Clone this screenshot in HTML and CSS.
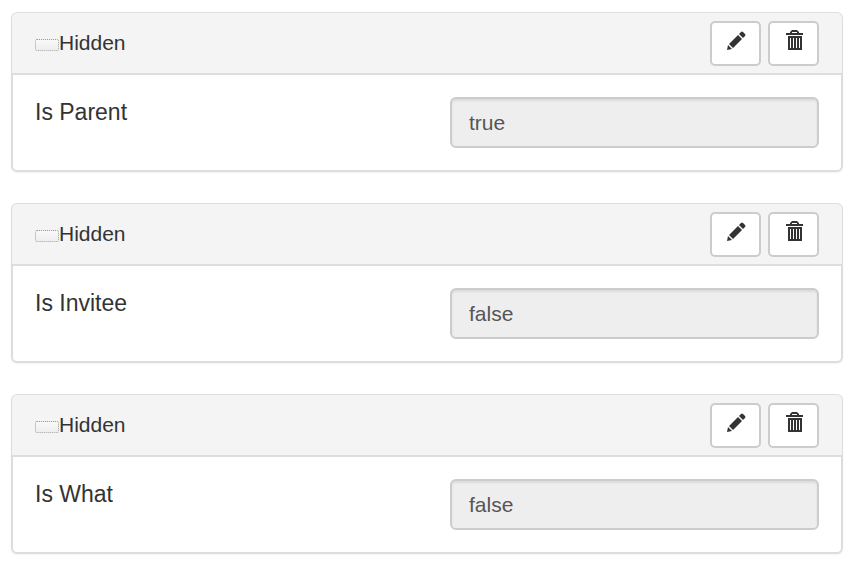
FILE: index.html
```html
<!DOCTYPE html>
<html lang="en">
<head>
    <meta charset="UTF-8">
    <meta name="viewport" content="width=device-width, initial-scale=1.0">
    <title>Hidden Fields</title>
    <link rel="stylesheet" href="styles.css">
</head>
<body>
    <svg class="sprite" aria-hidden="true">
        <symbol id="pencil" viewBox="0 0 20 20">
            <path d="M1 20l1-5 4 4zM3 14l9-9 4 4-9 9zM13 4l2-2q1-1 2 0l2 2q1 1 0 2l-2 2z"/>
        </symbol>
        <symbol id="trash" viewBox="0 0 20 20">
            <path fill-rule="evenodd" d="M6 3V2L8 0h5l2 2v1h4v2H2V3zM8 3h5V2H8zM4 6h14v14H4zM6 8v10h1V8zM9 8v10h1V8zM12 8v10h1V8zM15 8v10h1V8z"/>
        </symbol>
    </svg>

    <div class="container">
        <div class="panel">
            <div class="panel-heading">
                <span class="field-icon"></span>
                <span class="field-type">Hidden</span>
                <button type="button" class="btn" aria-label="Edit"><svg class="icon"><use href="#pencil"/></svg></button>
                <button type="button" class="btn" aria-label="Delete"><svg class="icon"><use href="#trash"/></svg></button>
            </div>
            <div class="panel-body">
                <label for="isParent">Is Parent</label>
                <input type="text" id="isParent" class="form-control" value="true" readonly>
            </div>
        </div>

        <div class="panel">
            <div class="panel-heading">
                <span class="field-icon"></span>
                <span class="field-type">Hidden</span>
                <button type="button" class="btn" aria-label="Edit"><svg class="icon"><use href="#pencil"/></svg></button>
                <button type="button" class="btn" aria-label="Delete"><svg class="icon"><use href="#trash"/></svg></button>
            </div>
            <div class="panel-body">
                <label for="isInvitee">Is Invitee</label>
                <input type="text" id="isInvitee" class="form-control" value="false" readonly>
            </div>
        </div>

        <div class="panel">
            <div class="panel-heading">
                <span class="field-icon"></span>
                <span class="field-type">Hidden</span>
                <button type="button" class="btn" aria-label="Edit"><svg class="icon"><use href="#pencil"/></svg></button>
                <button type="button" class="btn" aria-label="Delete"><svg class="icon"><use href="#trash"/></svg></button>
            </div>
            <div class="panel-body">
                <label for="isWhat">Is What</label>
                <input type="text" id="isWhat" class="form-control" value="false" readonly>
            </div>
        </div>
    </div>
</body>
</html>
```
FILE: styles.css
```css
* {
    box-sizing: border-box;
}

body {
    margin: 0;
    background: #fff;
    color: #333;
    font-family: "Liberation Sans", Arial, sans-serif;
    font-size: 21px;
    line-height: 30px;
}

.sprite {
    display: none;
}

.container {
    display: flex;
    flex-direction: column;
    gap: 31px;
    padding: 12px 8px 8px 11px;
}

.panel {
    border: 2px solid #ddd;
    border-radius: 6px;
    background: #fff;
    box-shadow: 0 1px 2px rgba(0, 0, 0, 0.05);
}

/* grey heading runs 1px over the panel border */
.panel-heading {
    display: flex;
    align-items: center;
    margin: -1px -1px 0;
    padding: 8px 23px 7px;
    background: #f4f4f4;
    border-bottom: 2px solid #ddd;
    border-radius: 5px 5px 0 0;
}

.field-icon {
    width: 24px;
    height: 12px;
    margin-top: 3px;
    border: 1px dotted #999;
    border-radius: 2px;
    background: linear-gradient(#f9f9f9, #eee);
}

.field-type {
    flex: 1;
    padding-bottom: 2px;
}

.btn {
    display: flex;
    justify-content: center;
    width: 51px;
    height: 45px;
    margin-left: 7px;
    padding: 7px 0 0;
    border: 2px solid #ccc;
    border-radius: 5px;
    background: #fff;
    color: #333;
    cursor: pointer;
}

.btn:hover {
    background: #e6e6e6;
}

.icon {
    width: 20px;
    height: 20px;
    fill: currentColor;
}

.panel-body {
    display: grid;
    grid-template-columns: 1fr 1fr;
    column-gap: 46px;
    padding: 22px;
}

.panel-body label {
    font-size: 23px;
}

.form-control {
    width: 100%;
    height: 51px;
    padding: 0 17px;
    border: 2px solid #ccc;
    border-radius: 6px;
    background: #eee;
    box-shadow: inset 0 2px 2px rgba(0, 0, 0, 0.075);
    color: #555;
    font-family: inherit;
    font-size: 21px;
}
```
